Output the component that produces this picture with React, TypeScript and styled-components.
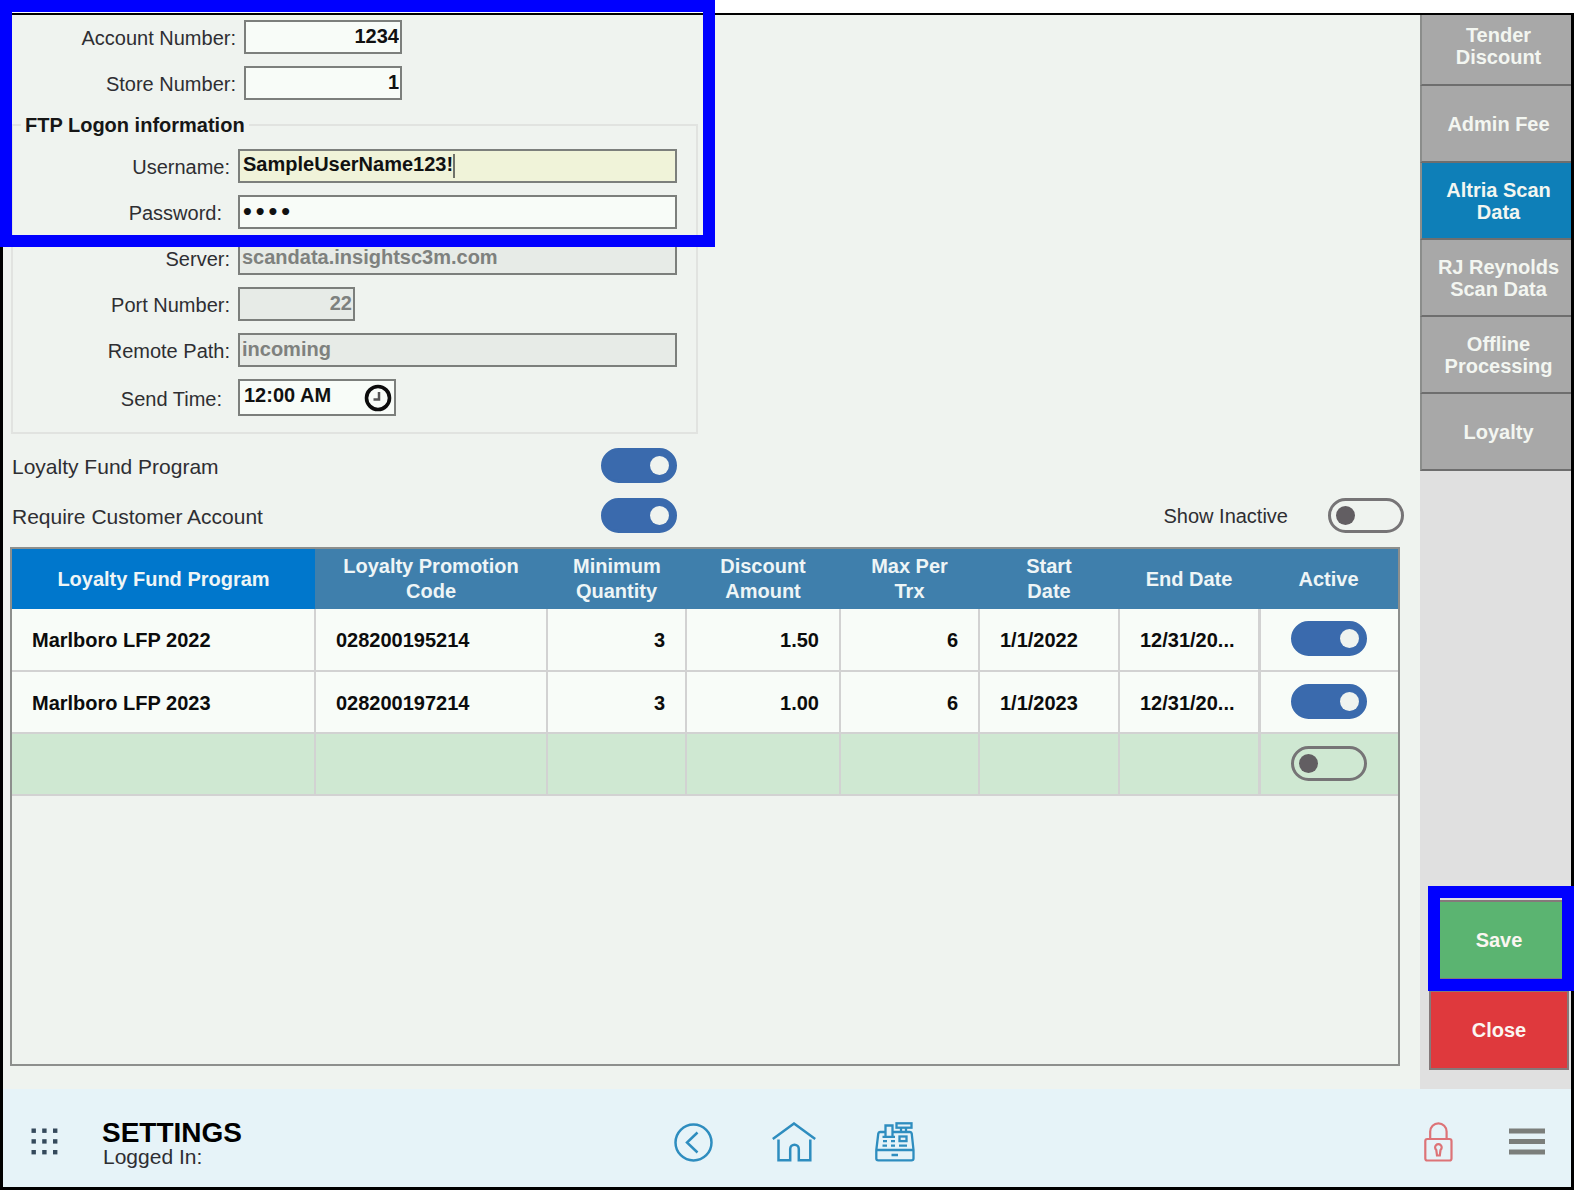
import React from "react";
import styled, { createGlobalStyle, css } from "styled-components";

const colors = {
  surface: "#eff3ef",
  field: "#f8fcf8",
  fieldDisabled: "#e7ebe7",
  fieldFocus: "#f0f3d9",
  fieldBorder: "#7c7f7c",
  ink: "#2e2e32",
  toggle: "#3a6aad",
  header: "#3f7fac",
  headerSelected: "#0077cc",
  grid: "#d2d2d2",
  footer: "#e6f3f8",
  icon: "#2e8dbf",
  highlight: "#0000ff",
};

const GlobalStyle = createGlobalStyle`
  *, *::before, *::after { box-sizing: border-box; }
  body { margin: 0; background: #ffffff; }
  body, input, button { font-family: "Liberation Sans", Arial, sans-serif; font-size: 20px; }
`;

const Page = styled.div`
  position: relative;
  display: flex;
  flex-direction: column;
  min-height: 100vh;
  padding: 13px 1px 1px 0;
`;

const Frame = styled.div`
  flex: 1;
  display: flex;
  flex-direction: column;
  border: 3px solid #000000;
  border-top-width: 2px;
  background: ${colors.surface};
`;

const Body = styled.div`
  flex: 1;
  display: grid;
  grid-template-columns: minmax(0, 1fr) 151px;
`;

const Main = styled.main`
  display: flex;
  flex-direction: column;
  padding: 5px 16px 23px 8px;
  color: ${colors.ink};
`;

const Highlight = styled.div`
  position: absolute;
  border: 12px solid ${colors.highlight};
  pointer-events: none;
`;

const FormHighlight = styled(Highlight)`
  top: 0;
  left: 0;
  width: 715px;
  height: 247px;
`;

const SaveHighlight = styled(Highlight)`
  inset: -14px -5px -11px -1px;
`;

const FieldList = styled.div`
  display: grid;
  gap: 12px;
`;

const FieldRow = styled.div<{ $labelWidth: number }>`
  display: grid;
  grid-template-columns: ${(p) => p.$labelWidth}px minmax(0, 1fr);
  align-items: center;
`;

const FieldLabel = styled.label<{ $inset?: boolean }>`
  padding: 2px ${(p) => (p.$inset ? 16 : 8)}px 0 0;
  line-height: 24px;
  text-align: right;
`;

const fieldBox = css`
  height: 34px;
  border: 2px solid ${colors.fieldBorder};
  background: ${colors.field};
  color: #111111;
  font-weight: 700;
`;

const Field = styled.input<{ $width: number; $numeric?: boolean }>`
  ${fieldBox}
  width: ${(p) => p.$width}px;
  padding: 0 1px 1px 2px;
  border-radius: 0;
  outline: none;
  text-align: ${(p) => (p.$numeric ? "right" : "left")};
  &:disabled {
    background: ${colors.fieldDisabled};
    color: #7e817e;
  }
  &[type="password"] {
    padding: 0 1px;
    font-family: "DejaVu Sans", sans-serif;
    font-weight: 700;
  }
`;

const FieldShell = styled.div<{ $width: number; $focused?: boolean }>`
  ${fieldBox}
  display: flex;
  align-items: center;
  width: ${(p) => p.$width}px;
  padding-left: 3px;
  ${(p) => p.$focused && `background: ${colors.fieldFocus};`}
`;

const TimeShell = styled(FieldShell)`
  height: 37px;
  padding: 0 2px 0 4px;
  justify-content: space-between;
`;

const BareInput = styled.input`
  min-width: 0;
  padding: 0 0 3px;
  border: 0;
  outline: none;
  background: transparent;
  color: inherit;
  font-weight: 700;
  caret-color: transparent;
  field-sizing: content;
`;

const TimeInput = styled(BareInput)`
  padding-bottom: 5px;
`;

const Caret = styled.span`
  width: 2px;
  height: 24px;
  background: #70726a;
`;

const IconButton = styled.button`
  display: flex;
  padding: 0;
  border: 0;
  background: none;
  cursor: pointer;
`;

const Group = styled.fieldset`
  max-width: 687px;
  margin: 13px 0 0;
  padding: 12px 8px 16px;
  border: 2px solid #e1e3e0;
  min-width: 0;
`;

const GroupTitle = styled.legend`
  padding: 0 4px;
  color: #161616;
  font-size: 20px;
  font-weight: 700;
  line-height: 24px;
`;

const Options = styled.div`
  display: grid;
  gap: 15px;
  margin: 14px 0;
`;

const OptionRow = styled.div`
  display: flex;
  justify-content: space-between;
`;

const Option = styled.label<{ $width?: number }>`
  display: flex;
  align-items: center;
  justify-content: space-between;
  gap: 40px;
  width: ${(p) => (p.$width ? `${p.$width}px` : "auto")};
  padding-left: 1px;
`;

const OptionText = styled.span<{ $large?: boolean }>`
  padding-top: 2px;
  font-size: ${(p) => (p.$large ? 21 : 20)}px;
`;

const Toggle = styled.input.attrs({ type: "checkbox", role: "switch" })`
  appearance: none;
  display: inline-flex;
  align-items: center;
  flex: none;
  width: 76px;
  height: 35px;
  margin: 0;
  padding: 0 5px;
  border: 3px solid #767476;
  border-radius: 18px;
  cursor: pointer;
  vertical-align: middle;
  &::before {
    content: "";
    width: 19px;
    height: 19px;
    border-radius: 50%;
    background: #625e62;
  }
  &:checked {
    justify-content: flex-end;
    border-color: ${colors.toggle};
    background: ${colors.toggle};
  }
  &:checked::before {
    background: ${colors.surface};
  }
`;

const TablePanel = styled.section`
  flex: 1;
  margin-right: 4px;
  border: 2px solid #8d8f8d;
  margin-left: -1px;
`;

const Table = styled.table`
  width: 100%;
  table-layout: fixed;
  border-collapse: collapse;
`;

const Column = styled.col<{ $width?: number }>`
  width: ${(p) => (p.$width ? `${p.$width}px` : "auto")};
`;

const HeaderCell = styled.th<{ $selected?: boolean }>`
  height: 60px;
  padding: 0 26px;
  background: ${(p) => (p.$selected ? colors.headerSelected : colors.header)};
  color: #eef5f6;
  line-height: 25px;
`;

const Row = styled.tr<{ $blank?: boolean }>`
  height: 62px;
  background: ${(p) => (p.$blank ? "#cfe8d2" : colors.field)};
`;

const Cell = styled.td<{ $align?: "right" }>`
  padding: 2px 20px 0;
  border-right: 2px solid ${colors.grid};
  border-bottom: 2px solid ${colors.grid};
  color: #0c0c0c;
  font-weight: 700;
  text-align: ${(p) => p.$align ?? "left"};
  white-space: nowrap;
`;

const ToggleCell = styled(Cell)`
  padding: 0 0 2px;
  border-right: 0;
  border-left: 3px solid ${colors.grid};
  text-align: center;
`;

const Sidebar = styled.aside`
  display: flex;
  flex-direction: column;
  justify-content: space-between;
  background: #e0e0e0;
`;

const Tabs = styled.nav`
  display: flex;
  flex-direction: column;
`;

const Tab = styled.button<{ $active?: boolean }>`
  height: 77px;
  padding: 0 10px 0 14px;
  border: 0;
  border-left: 2px solid #8b8d8b;
  border-bottom: 2px solid #6e6e6e;
  background: ${(p) => (p.$active ? "#0e7fb8" : "#a8a8a8")};
  color: #f3f6f1;
  font-weight: 700;
  line-height: 22px;
  cursor: pointer;
  &:first-child {
    height: 71px;
    padding-bottom: 8px;
  }
`;

const Actions = styled.div`
  display: grid;
  gap: 10px;
  padding: 0 2px 19px 9px;
`;

const ActionSlot = styled.div`
  position: relative;
  display: grid;
`;

const ActionButton = styled.button<{ $tone: string }>`
  height: 80px;
  border: 2px solid #85797a;
  background: ${(p) => p.$tone};
  color: #fbf6f1;
  font-weight: 700;
  cursor: pointer;
`;

const Footer = styled.footer`
  display: flex;
  align-items: stretch;
  height: 98px;
  padding: 0 14px 0 28px;
  background: ${colors.footer};
`;

const FooterSide = styled.div<{ $end?: boolean }>`
  flex: 1;
  display: flex;
  align-items: center;
  justify-content: ${(p) => (p.$end ? "flex-end" : "flex-start")};
  gap: ${(p) => (p.$end ? 44 : 43)}px;
  padding-top: 8px;
`;

const FooterNav = styled.nav`
  display: flex;
  align-items: center;
  gap: 59px;
  padding-top: 8px;
`;

const MenuButton = styled(IconButton)`
  padding: 0 12px;
`;

const TitleBlock = styled.div`
  display: flex;
  flex-direction: column;
  padding-top: 2px;
`;

const Title = styled.h1`
  margin: 0;
  color: #000000;
  font-size: 28px;
  line-height: 28px;
`;

const LoggedIn = styled.div`
  padding-left: 1px;
  color: ${colors.ink};
  font-size: 21px;
  line-height: 20px;
`;

const ClockIcon = () => (
  <svg width="28" height="28" viewBox="0 0 28 28" fill="none">
    <circle cx="14" cy="14" r="11.5" stroke="#0c0c0c" strokeWidth="3.6" />
    <path d="M15 8V15.500H9.500" stroke="#555" strokeWidth="2.500" />
  </svg>
);

const GridIcon = () => (
  <svg width="28" height="28" viewBox="0 0 28 28" fill="#34495b">
    {[0.5, 11.2, 22].map((y) =>
      [0.5, 11.2, 22].map((x) => <rect key={`${x}-${y}`} x={x} y={y} width="4.400" height="4.400" />)
    )}
  </svg>
);

const BackIcon = () => (
  <svg width="39" height="39" viewBox="0 0 39 39" fill="none" stroke={colors.icon} strokeWidth="2.500">
    <circle cx="19.500" cy="19.500" r="18" />
    <path d="M23.500 9.500L13 19.500L23.500 29.500" />
  </svg>
);

const HomeIcon = () => (
  <svg width="44" height="40" viewBox="0 0 44 40" fill="none" stroke={colors.icon} strokeWidth="2.500">
    <path d="M0.800 17L22 1.500L43.200 17" />
    <path d="M6.500 17.500V38.300H18.200V27A4.300 4.300 0 0 1 26.800 27V38.300H38.300V17.500" />
  </svg>
);

const RegisterIcon = () => (
  <svg width="40" height="40" viewBox="0 0 40 40" fill="none" stroke={colors.icon} strokeWidth="2.300">
    <path d="M10.500 10H5Q3.500 10 3.300 11.500L1.300 28V36.500Q1.300 38.300 3.300 38.300H36.500Q38.500 38.300 38.500 36.500V28L36.700 11.500Q36.500 10 35 10H17.500" />
    <path d="M1.300 28H38.500" />
    <path d="M10.500 14.500V3.500H17.500V14.500M7.500 14.800H20" />
    <rect x="21.500" y="1.300" width="15" height="4.400" />
    <path d="M26 6V9.500M31 6V9.500" />
    <rect x="24.500" y="14.500" width="7" height="4.600" />
    <path d="M8 19.200H12M16 19.200H20M7.500 23.700H12M16 23.700H20M24 23.700H32M16.500 33H23" />
  </svg>
);

const LockIcon = () => (
  <svg width="29" height="40" viewBox="0 0 29 40" fill="none" stroke="#dd7377" strokeWidth="2.200">
    <rect x="1.300" y="17" width="26.200" height="21.500" rx="2" />
    <path d="M6.200 17V9.500A8.200 8.200 0 0 1 22.600 9.500V17" />
    <path d="M12.300 28A3.300 3.300 0 1 1 16.500 28L15.800 33.500H13Z" />
  </svg>
);

const MenuIcon = () => (
  <svg width="36" height="28" viewBox="0 0 36 28" fill="#7b7e7b">
    <rect y="0.500" width="36" height="5" />
    <rect y="11" width="36" height="5" />
    <rect y="21.500" width="36" height="5" />
  </svg>
);

const tabs = ["Tender Discount", "Admin Fee", "Altria Scan Data", "RJ Reynolds Scan Data", "Offline Processing", "Loyalty"];

const columns = [
  { title: "Loyalty Fund Program" },
  { title: "Loyalty Promotion Code", width: 232 },
  { title: "Minimum Quantity", width: 139 },
  { title: "Discount Amount", width: 154 },
  { title: "Max Per Trx", width: 139 },
  { title: "Start Date", width: 140 },
  { title: "End Date", width: 140 },
  { title: "Active", width: 139 },
];

const programs = [
  { name: "Marlboro LFP 2022", code: "028200195214", min: "3", amount: "1.50", max: "6", start: "1/1/2022", end: "12/31/20...", active: true },
  { name: "Marlboro LFP 2023", code: "028200197214", min: "3", amount: "1.00", max: "6", start: "1/1/2023", end: "12/31/20...", active: true },
  { name: "", code: "", min: "", amount: "", max: "", start: "", end: "", active: false },
];

export default function App() {
  return (
    <Page>
      <GlobalStyle />
      <Frame>
        <Body>
          <Main>
            <FieldList>
              <FieldRow $labelWidth={233}>
                <FieldLabel htmlFor="account">Account Number:</FieldLabel>
                <Field id="account" $width={158} $numeric defaultValue="1234" />
              </FieldRow>
              <FieldRow $labelWidth={233}>
                <FieldLabel htmlFor="store">Store Number:</FieldLabel>
                <Field id="store" $width={158} $numeric defaultValue="1" />
              </FieldRow>
            </FieldList>

            <Group>
              <GroupTitle>FTP Logon information</GroupTitle>
              <FieldList>
                <FieldRow $labelWidth={217}>
                  <FieldLabel htmlFor="username">Username:</FieldLabel>
                  <FieldShell $width={439} $focused>
                    <BareInput id="username" defaultValue="SampleUserName123!" />
                    <Caret />
                  </FieldShell>
                </FieldRow>
                <FieldRow $labelWidth={217}>
                  <FieldLabel htmlFor="password" $inset>Password:</FieldLabel>
                  <Field id="password" type="password" $width={439} defaultValue="1234" />
                </FieldRow>
                <FieldRow $labelWidth={217}>
                  <FieldLabel htmlFor="server">Server:</FieldLabel>
                  <Field id="server" $width={439} disabled defaultValue="scandata.insightsc3m.com" />
                </FieldRow>
                <FieldRow $labelWidth={217}>
                  <FieldLabel htmlFor="port">Port Number:</FieldLabel>
                  <Field id="port" $width={117} $numeric disabled defaultValue="22" />
                </FieldRow>
                <FieldRow $labelWidth={217}>
                  <FieldLabel htmlFor="path">Remote Path:</FieldLabel>
                  <Field id="path" $width={439} disabled defaultValue="incoming" />
                </FieldRow>
                <FieldRow $labelWidth={217}>
                  <FieldLabel htmlFor="time" $inset>Send Time:</FieldLabel>
                  <TimeShell $width={158}>
                    <TimeInput id="time" defaultValue="12:00 AM" />
                    <IconButton type="button" aria-label="Pick time"><ClockIcon /></IconButton>
                  </TimeShell>
                </FieldRow>
              </FieldList>
            </Group>

            <Options>
              <OptionRow>
                <Option $width={666}>
                  <OptionText $large>Loyalty Fund Program</OptionText>
                  <Toggle defaultChecked />
                </Option>
              </OptionRow>
              <OptionRow>
                <Option $width={666}>
                  <OptionText $large>Require Customer Account</OptionText>
                  <Toggle defaultChecked />
                </Option>
                <Option>
                  <OptionText>Show Inactive</OptionText>
                  <Toggle />
                </Option>
              </OptionRow>
            </Options>

            <TablePanel>
              <Table>
                <colgroup>
                  {columns.map((c) => <Column key={c.title} $width={c.width} />)}
                </colgroup>
                <thead>
                  <tr>
                    {columns.map((c, i) => (
                      <HeaderCell key={c.title} $selected={i === 0}>{c.title}</HeaderCell>
                    ))}
                  </tr>
                </thead>
                <tbody>
                  {programs.map((p, i) => (
                    <Row key={i} $blank={!p.name}>
                      <Cell>{p.name}</Cell>
                      <Cell>{p.code}</Cell>
                      <Cell $align="right">{p.min}</Cell>
                      <Cell $align="right">{p.amount}</Cell>
                      <Cell $align="right">{p.max}</Cell>
                      <Cell>{p.start}</Cell>
                      <Cell>{p.end}</Cell>
                      <ToggleCell><Toggle aria-label="Active" defaultChecked={p.active} /></ToggleCell>
                    </Row>
                  ))}
                </tbody>
              </Table>
            </TablePanel>
          </Main>

          <Sidebar>
            <Tabs>
              {tabs.map((t) => (
                <Tab key={t} type="button" $active={t === "Altria Scan Data"}>{t}</Tab>
              ))}
            </Tabs>
            <Actions>
              <ActionSlot>
                <ActionButton type="button" $tone="#5bb471">Save</ActionButton>
                <SaveHighlight />
              </ActionSlot>
              <ActionButton type="button" $tone="#df393d">Close</ActionButton>
            </Actions>
          </Sidebar>
        </Body>

        <Footer>
          <FooterSide>
            <IconButton type="button" aria-label="Apps"><GridIcon /></IconButton>
            <TitleBlock>
              <Title>SETTINGS</Title>
              <LoggedIn>Logged In:</LoggedIn>
            </TitleBlock>
          </FooterSide>
          <FooterNav>
            <IconButton type="button" aria-label="Back"><BackIcon /></IconButton>
            <IconButton type="button" aria-label="Home"><HomeIcon /></IconButton>
            <IconButton type="button" aria-label="Register"><RegisterIcon /></IconButton>
          </FooterNav>
          <FooterSide $end>
            <IconButton type="button" aria-label="Lock"><LockIcon /></IconButton>
            <MenuButton type="button" aria-label="Menu"><MenuIcon /></MenuButton>
          </FooterSide>
        </Footer>
      </Frame>
      <FormHighlight />
    </Page>
  );
}
